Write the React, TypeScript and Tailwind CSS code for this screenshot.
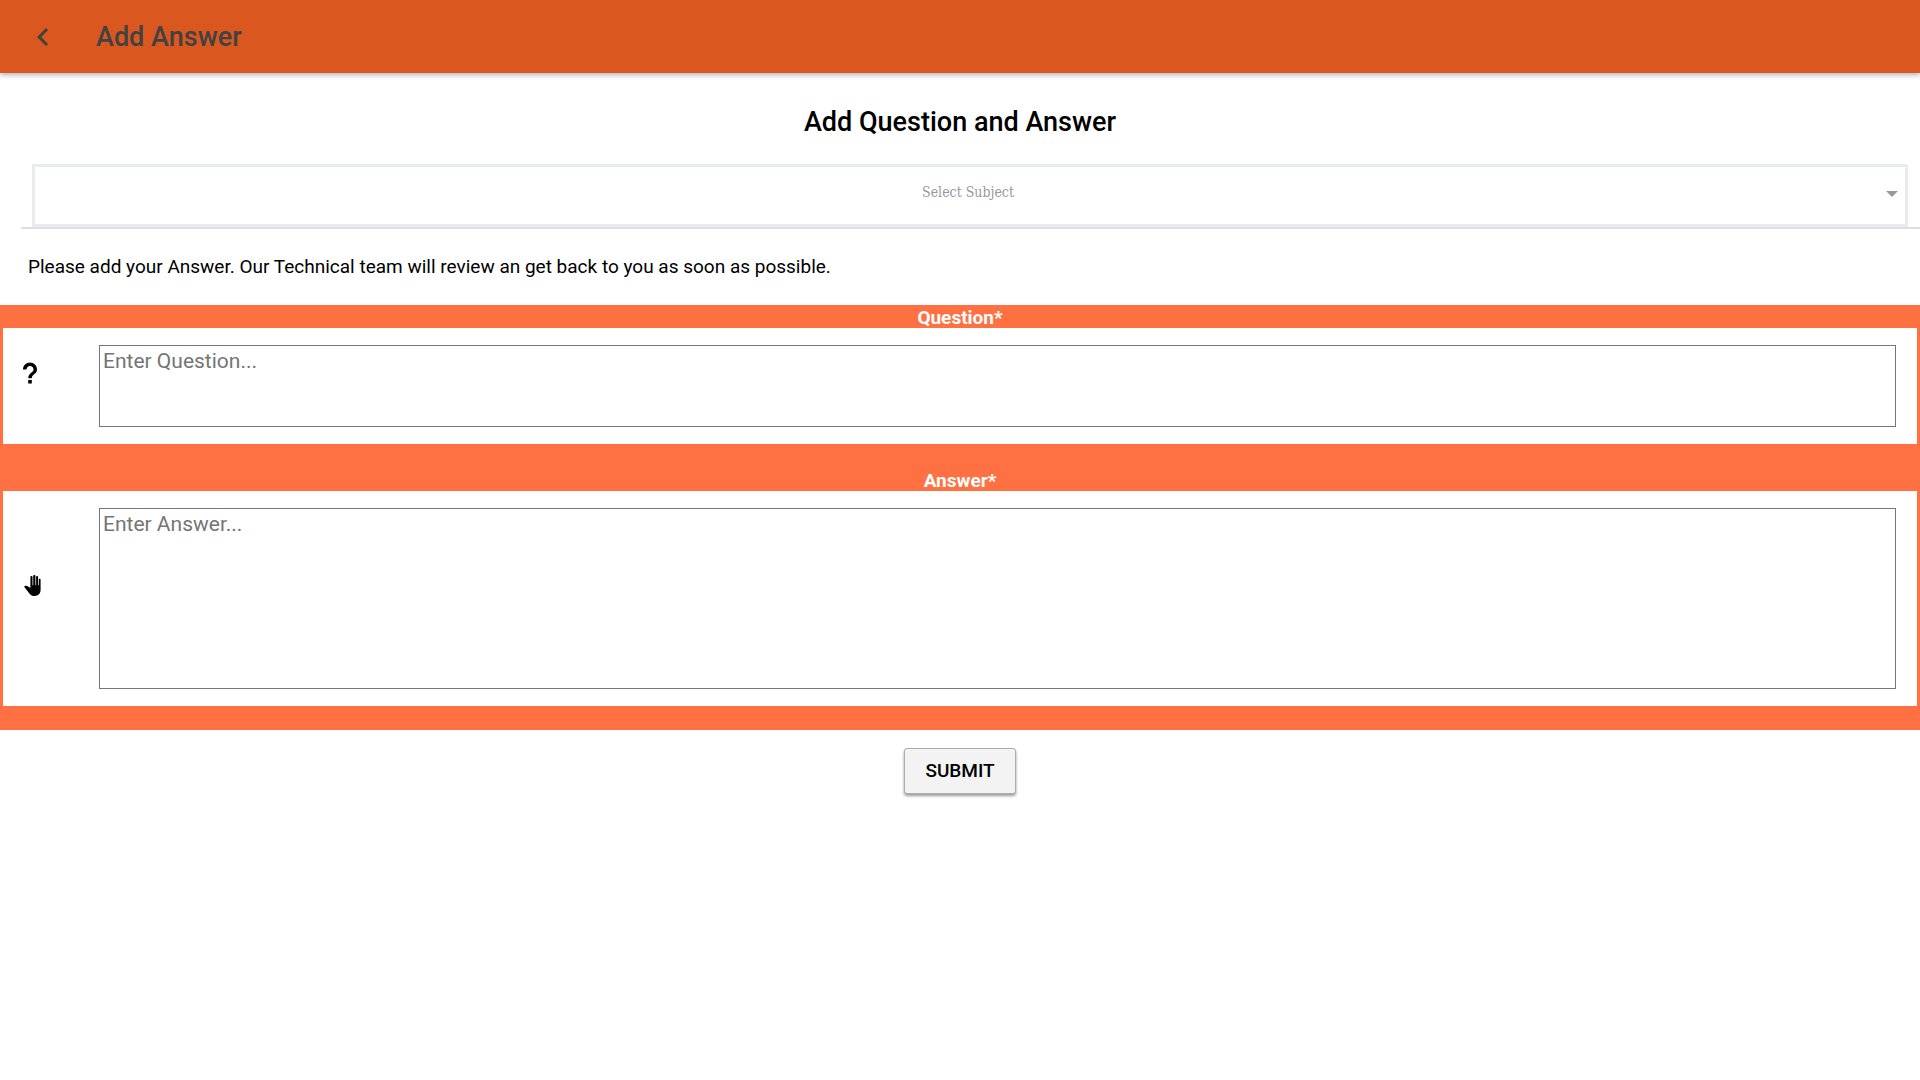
import { useState } from 'react';
import type { FormEvent, ReactNode } from 'react';
import { MdChevronLeft } from 'react-icons/md';
import { IoMdHelp } from 'react-icons/io';

type FieldProps = {
  id: string;
  label: string;
  icon: ReactNode;
  children: ReactNode;
};

function HandIcon() {
  return (
    <svg viewBox="0 0 17 21" className="ml-2 h-[21px] w-[17px]">
      <path
        fill="currentColor"
        d="M16.6 4.8c0-.7-.4-1.1-.9-1.1s-.9.4-.9 1.1v5.4h-.7V2.1c0-.7-.4-1.1-1-1.1s-1 .4-1 1.1v8.1h-.7V1.1C11.4.4 10.9 0 10.3 0S9.2.4 9.2 1.1v9.1h-.7V2.1C8.500 1.400 8.100 1 7.500 1s-1.100.4-1.100 1.100v10.700L3 11C2.200 10.600 1.100 10.600.6 11.100c-.5.5-.4 1 .1 1.500l4.900 6.100C6.900 20.300 8.400 21 10.500 21c3.700 0 6.100-2.300 6.100-6.200z"
      />
    </svg>
  );
}

function Field({ id, label, icon, children }: FieldProps) {
  return (
    <div className="px-[3px] pb-6">
      <label htmlFor={id} className="block pt-[3px] text-center text-[19px] leading-5 font-bold text-white">
        {label}
      </label>
      <div className="flex bg-white py-[17px] pr-[21px] pl-[13px]">
        <div className="w-[83px] shrink-0 self-center pb-[26px]">{icon}</div>
        {children}
      </div>
    </div>
  );
}

export default function App() {
  const [subject, setSubject] = useState('');
  const [question, setQuestion] = useState('');
  const [answer, setAnswer] = useState('');

  const handleSubmit = (e: FormEvent) => {
    e.preventDefault();
  };

  return (
    <div className="min-h-screen bg-white font-[Roboto,sans-serif] text-black">
      <header className="flex h-[73px] items-center bg-[#da5820] pl-[25px] text-[#424242] shadow-[0_2px_5px_rgba(0,0,0,0.3)]">
        <button type="button" aria-label="Back" className="mr-[35px]">
          <MdChevronLeft className="size-9" />
        </button>
        <h1 className="text-[27px] leading-8 font-medium">Add Answer</h1>
      </header>

      <main>
        <form onSubmit={handleSubmit}>
          <h2 className="pt-[33px] pb-[26px] text-center text-[27px] leading-8 font-medium">
            Add Question and Answer
          </h2>

          <div className="ml-[21px] border-b-2 border-[#dedede] pr-3 pl-[11px]">
            <div className="relative">
              <select
                aria-label="Select Subject"
                value={subject}
                onChange={(e) => setSubject(e.target.value)}
                className="block h-[63px] w-full appearance-none border-3 border-[#e8ebf0] bg-white pr-2 pb-2 pl-1 font-['DejaVu_Serif_Condensed','DejaVu_Serif',serif] text-sm text-[#999] [text-align-last:center]"
              >
                <option value="">Select Subject</option>
              </select>
              <svg
                viewBox="0 0 12 6"
                className="pointer-events-none absolute top-[27px] right-2.5 h-1.5 w-3 fill-[#999]"
              >
                <path d="M0 0h12L6 6z" />
              </svg>
            </div>
          </div>

          <p className="px-7 pt-[26px] pb-[26px] text-[19px] leading-6">
            Please add your Answer. Our Technical team will review an get back to you as soon as possible.
          </p>

          <div className="bg-[#ff7143]">
            <Field id="question" label="Question*" icon={<IoMdHelp className="size-7" />}>
              <textarea
                id="question"
                value={question}
                onChange={(e) => setQuestion(e.target.value)}
                placeholder="Enter Question..."
                className="block h-[82px] flex-1 resize-none border border-[#767676] p-[3px] text-[21px] leading-6 placeholder:text-[#757575]"
              />
            </Field>
            <Field id="answer" label="Answer*" icon={<HandIcon />}>
              <textarea
                id="answer"
                value={answer}
                onChange={(e) => setAnswer(e.target.value)}
                placeholder="Enter Answer..."
                className="block h-[181px] flex-1 resize-none border border-[#767676] p-[3px] text-[21px] leading-6 placeholder:text-[#757575]"
              />
            </Field>
          </div>

          <div className="flex justify-center pt-[18px] pb-6">
            <button
              type="submit"
              className="h-[46px] rounded-[3px] border border-[#a9b0b0] bg-[#f3f3f3] px-5 text-[19px] font-medium shadow-[0_2px_3px_rgba(0,0,0,0.4)]"
            >
              SUBMIT
            </button>
          </div>
        </form>
      </main>
    </div>
  );
}
